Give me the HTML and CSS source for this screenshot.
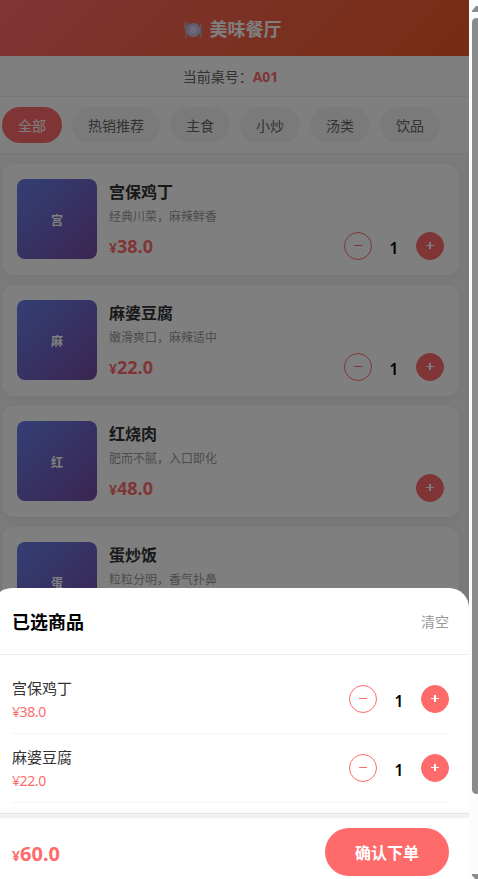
FILE: index.html
```html
<!DOCTYPE html>
<html lang="zh-CN">
<head>
<meta charset="UTF-8">
<title>美味餐厅</title>
<link rel="stylesheet" href="styles.css">
</head>
<body>
<div class="page">
  <header class="header">
    <svg class="plate" viewBox="0 0 20 18" aria-hidden="true">
      <path d="M1 1v5q0 2 1.500 2v8.500h1.500V8Q5.500 8 5.500 6V1H4.500v4H3.800V1H2.800v4H2V1z" fill="#aab1bd"/>
      <path d="M17 16.500V2q1.600 1 1.600 5v9.500z" fill="#aab1bd"/>
      <circle cx="10.500" cy="9" r="7" fill="#c7bde0"/>
      <circle cx="10.500" cy="9" r="4.600" fill="#d9d1ed" stroke="#b3a9d2" stroke-width=".7"/>
    </svg>
    <h1>美味餐厅</h1>
  </header>
  <div class="table-info">当前桌号：<strong>A01</strong></div>
  <nav class="tabs">
    <span class="tab active">全部</span>
    <span class="tab">热销推荐</span>
    <span class="tab">主食</span>
    <span class="tab">小炒</span>
    <span class="tab">汤类</span>
    <span class="tab">饮品</span>
  </nav>
  <main class="list">
    <article class="card">
      <div class="thumb">宫</div>
      <div class="info">
        <h2>宫保鸡丁</h2>
        <p class="desc">经典川菜，麻辣鲜香</p>
        <div class="row">
          <span class="price"><small>¥</small>38.0</span>
          <div class="stepper"><span class="btn minus"></span><span class="count">1</span><span class="btn plus"></span></div>
        </div>
      </div>
    </article>
    <article class="card">
      <div class="thumb">麻</div>
      <div class="info">
        <h2>麻婆豆腐</h2>
        <p class="desc">嫩滑爽口，麻辣适中</p>
        <div class="row">
          <span class="price"><small>¥</small>22.0</span>
          <div class="stepper"><span class="btn minus"></span><span class="count">1</span><span class="btn plus"></span></div>
        </div>
      </div>
    </article>
    <article class="card">
      <div class="thumb">红</div>
      <div class="info">
        <h2>红烧肉</h2>
        <p class="desc">肥而不腻，入口即化</p>
        <div class="row">
          <span class="price"><small>¥</small>48.0</span>
          <div class="stepper"><span class="btn plus"></span></div>
        </div>
      </div>
    </article>
    <article class="card">
      <div class="thumb">蛋</div>
      <div class="info">
        <h2>蛋炒饭</h2>
        <p class="desc">粒粒分明，香气扑鼻</p>
      </div>
    </article>
  </main>
  <div class="overlay">
    <section class="sheet">
      <div class="sheet-head"><h3>已选商品</h3><span class="clear">清空</span></div>
      <div class="sheet-body">
        <div class="item">
          <div><div class="name">宫保鸡丁</div><div class="item-price">¥38.0</div></div>
          <div class="stepper"><span class="btn minus"></span><span class="count">1</span><span class="btn plus"></span></div>
        </div>
        <div class="item">
          <div><div class="name">麻婆豆腐</div><div class="item-price">¥22.0</div></div>
          <div class="stepper"><span class="btn minus"></span><span class="count">1</span><span class="btn plus"></span></div>
        </div>
      </div>
      <div class="divider"></div>
      <div class="bar">
        <span class="total"><small>¥</small>60.0</span>
        <span class="submit">确认下单</span>
      </div>
    </section>
  </div>
</div>
<div class="scrollbar">
  <span class="arrow up"></span>
  <span class="scroll-thumb"></span>
  <span class="arrow down"></span>
</div>
</body>
</html>
```
FILE: styles.css
```css
* { box-sizing: border-box; margin: 0; padding: 0; }

body {
  display: flex;
  height: 879px;
  overflow: hidden;
  background: #fff;
  font-family: "Noto Sans", "Noto Sans CJK SC", sans-serif;
  color: #000;
}

.page {
  position: relative;
  flex: none;
  width: 477px;
  height: 879px;
  margin-left: -8px;
  overflow: hidden;
  background: #f5f5f5;
}

.header {
  display: flex;
  align-items: center;
  justify-content: center;
  gap: 7px;
  height: 56px;
  padding: 3px 0 0 3px;
  background: linear-gradient(135deg, #ff6b6b, #ee5a24);
  color: #fff;
}

.plate { width: 20px; height: 18px; }
.header h1 { margin-top: -2px; font-size: 18px; line-height: 26px; font-weight: 700; }

.table-info {
  height: 41px;
  border-bottom: 1px solid #eee;
  background: #fff;
  text-align: center;
  font-size: 14px;
  line-height: 41px;
  color: #666;
}

.table-info strong { color: #ff6b6b; }

.tabs {
  display: flex;
  gap: 10px;
  height: 57px;
  padding: 10px;
  border-bottom: 1px solid #eee;
  background: #fff;
}

.tab {
  height: 36px;
  padding: 0 16px;
  border-radius: 18px;
  background: #f5f5f5;
  color: #666;
  font-size: 14px;
  line-height: 37px;
  white-space: nowrap;
}

.tab.active { background: #ff6b6b; color: #fff; }

.list { display: flex; flex-direction: column; gap: 10px; padding: 10px; }

.card {
  display: flex;
  gap: 12px;
  height: 111px;
  padding: 15px;
  border-radius: 12px;
  background: #fff;
  box-shadow: 0 2px 8px rgba(0, 0, 0, .05);
}

.thumb {
  flex: none;
  width: 80px;
  height: 80px;
  border-radius: 8px;
  background: linear-gradient(135deg, #667eea, #764ba2);
  color: #fff;
  font-size: 12px;
  font-weight: 700;
  line-height: 84px;
  text-align: center;
}

.info { flex: 1; }
.info h2 { height: 25px; font-size: 16px; line-height: 26px; font-weight: 700; color: #333; }
.desc { height: 28px; font-size: 12px; line-height: 25px; color: #999; }

.row { display: flex; align-items: center; justify-content: space-between; height: 28px; }
.price { font-size: 18px; line-height: 28px; padding-top: 2px; font-weight: 700; color: #ff6b6b; }
.price small { font-size: 14px; }

.stepper { display: flex; align-items: center; }

.btn {
  display: grid;
  place-items: center;
  width: 28px;
  height: 28px;
  border: 1px solid #ff6b6b;
  border-radius: 50%;
  color: #ff6b6b;
}

.btn::before,
.btn::after {
  content: "";
  grid-area: 1 / 1;
  width: 8px;
  height: 1px;
  margin-bottom: 1px;
  background: currentColor;
}

.btn.minus::after { display: none; }
.btn.plus { background: #ff6b6b; color: #fff; }
.btn.plus::before { width: 8px; }
.btn.plus::after { width: 2px; height: 7px; }

.count {
  width: 44px;
  padding-top: 4px;
  text-align: center;
  font-size: 15.5px;
  line-height: 22px;
  font-weight: 600;
}

.overlay {
  position: absolute;
  inset: 0;
  display: flex;
  flex-direction: column;
  justify-content: flex-end;
  background: rgba(0, 0, 0, .5);
}

.sheet {
  height: 291px;
  overflow: hidden;
  border-radius: 20px 20px 0 0;
  background: #fff;
}

.sheet-head {
  display: flex;
  align-items: center;
  justify-content: space-between;
  height: 67px;
  padding: 2px 20px 0;
  border-bottom: 1px solid #eee;
}

.sheet-head h3 { font-size: 18px; line-height: 26px; font-weight: 700; }
.clear { margin-top: -2px; font-size: 14px; color: #999; }

.sheet-body { height: 158px; padding: 10px 20px 0; }

.item {
  display: flex;
  align-items: center;
  justify-content: space-between;
  height: 69px;
  border-bottom: 1px solid #f5f5f5;
}

.name { height: 24px; font-size: 15px; line-height: 25px; color: #333; }
.item-price { height: 22px; font-size: 14px; line-height: 24px; letter-spacing: -.4px; color: #ff6b6b; }

.divider {
  height: 5px;
  border-top: 1px solid #e4e4e4;
  background: linear-gradient(#f3f3f3, #efefef);
  box-shadow: 0 -2px 6px rgba(0, 0, 0, .04);
}

.bar {
  display: flex;
  align-items: flex-start;
  justify-content: space-between;
  padding: 10px 20px;
}

.total { font-size: 20px; line-height: 52px; font-weight: 700; color: #ff6b6b; }
.total small { font-size: 14px; }

.submit {
  width: 124px;
  height: 48px;
  border-radius: 24px;
  background: #ff6b6b;
  color: #fff;
  font-size: 16px;
  line-height: 50px;
  font-weight: 700;
  text-align: center;
}

.scrollbar {
  flex: none;
  width: 15px;
  height: 879px;
  padding: 6px 0 0 3px;
  overflow: hidden;
  background: #fcfcfc;
}

.arrow {
  display: block;
  width: 10px;
  height: 6px;
  background: #8b8b8b;
}

.arrow.up { clip-path: polygon(0 100%, 0 80%, 40% 0, 60% 0, 100% 80%, 100% 100%); }
.arrow.down { clip-path: polygon(0 0, 100% 0, 100% 20%, 60% 100%, 40% 100%, 0 20%); }

.scroll-thumb {
  display: block;
  width: 9px;
  height: 776px;
  margin: 6px 0 80px;
  border-radius: 4.5px;
  background: #8b8b8b;
}
```
